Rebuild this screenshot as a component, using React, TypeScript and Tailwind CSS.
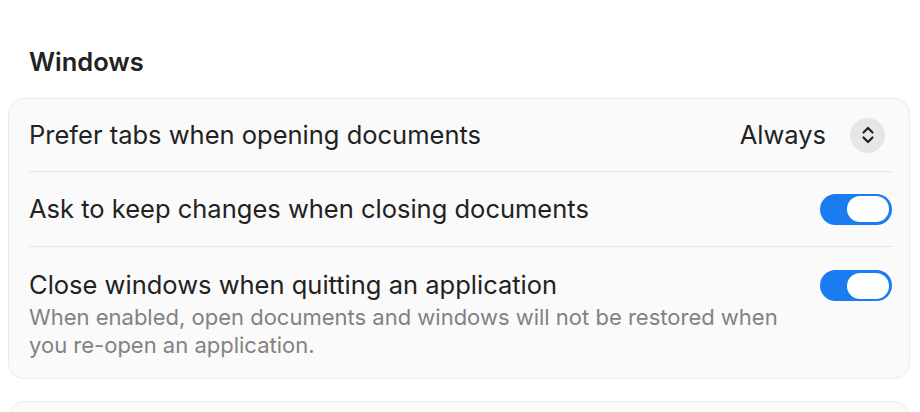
import React from "react";

function Toggle() {
  return (
    <div className="flex h-[31px] w-[72px] items-center justify-end rounded-full bg-[#1a7cf0] pr-[3px]">
      <div className="h-[26px] w-[42px] rounded-full bg-white" />
    </div>
  );
}

function Stepper() {
  return (
    <div className="flex h-[35px] w-[35px] items-center justify-center rounded-full bg-[#e6e6e6]">
      <svg width="14" height="20" viewBox="0 0 14 20" fill="none">
        <path d="M2.5 7.5 L7 3 L11.5 7.5" stroke="#1f1f1f" strokeWidth="2.2" strokeLinecap="round" strokeLinejoin="round" />
        <path d="M2.5 12.5 L7 17 L11.5 12.5" stroke="#1f1f1f" strokeWidth="2.2" strokeLinecap="round" strokeLinejoin="round" />
      </svg>
    </div>
  );
}

export default function App() {
  return (
    <div
      className="h-[412px] w-[920px] overflow-hidden bg-white pl-2 pr-[10px]"
      style={{ fontFamily: "Inter, 'Noto Sans', sans-serif" }}
    >
      <div className="pl-[21px] pt-[46px] text-[25.5px] font-semibold leading-[32px] text-[#222222]">
        Windows
      </div>
      <div className="mt-[20px] rounded-2xl border border-[#ebebeb] bg-[#fafafa] pl-5 pr-[17px]">
        <div className="flex h-[73px] items-center justify-between border-b border-[#e6e6e6]">
          <span className="text-[25.5px] text-[#222222]">Prefer tabs when opening documents</span>
          <div className="flex items-center gap-[24px] pr-[7px]">
            <span className="text-[25.5px] text-[#222222]">Always</span>
            <Stepper />
          </div>
        </div>
        <div className="flex h-[75px] items-center justify-between border-b border-[#e6e6e6]">
          <span className="text-[25.5px] text-[#222222]">Ask to keep changes when closing documents</span>
          <Toggle />
        </div>
        <div className="flex h-[131px] items-start justify-between pt-[22px]">
          <div className="flex flex-col">
            <span className="text-[25.5px] leading-[32px] text-[#222222]">
              Close windows when quitting an application
            </span>
            <span className="mt-[2px] w-[770px] text-[22px] leading-[28px] text-[#828282]">
              When enabled, open documents and windows will not be restored when you re-open an application.
            </span>
          </div>
          <div className="pt-[1px]">
            <Toggle />
          </div>
        </div>
      </div>
      <div className="mt-[22px] h-[100px] rounded-2xl border border-[#ebebeb] bg-[#fafafa]" />
    </div>
  );
}
